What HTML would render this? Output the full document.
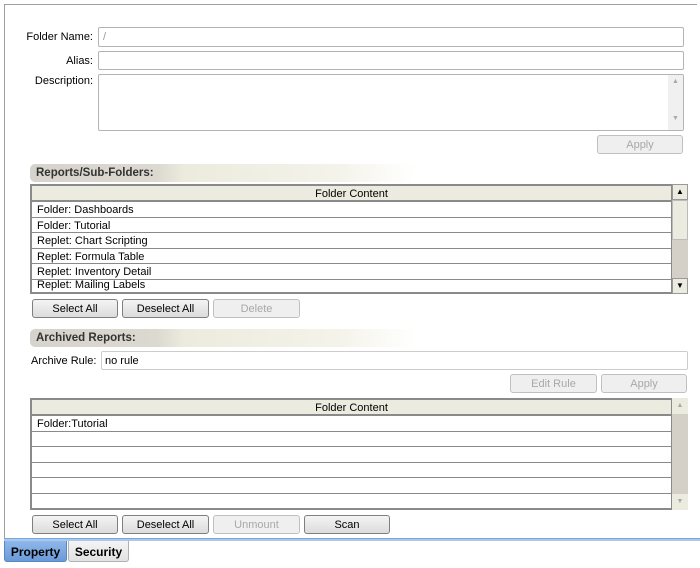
<!DOCTYPE html>
<html><head><style>
*{box-sizing:border-box;margin:0;padding:0}
body{width:700px;height:568px;background:#fff;font-family:"Liberation Sans",Arial,sans-serif;font-size:11px;color:#000;position:relative;overflow:hidden}
.a{position:absolute}
.frame{left:4px;top:4px;width:693px;height:536px;border-top:1px solid #a0a0a0;border-left:1px solid #a0a0a0}
.lbl{text-align:right;width:90px;left:3px}
.inp{border:1px solid #b4b4b4;background:#fff;border-radius:2px}
.btn{height:19px;border:1px solid #7f7f7f;border-radius:3px;background:linear-gradient(#f4f4f4,#dcdcdc);text-align:center;line-height:19px}
.dis{border-color:#c0c0c0;color:#a8a8a8;background:#efefef}
.hdr{height:18px;border-radius:5px 0 0 5px;background:linear-gradient(90deg,#d6d3cc 0%,#dcd9d0 33%,#ecebdd 40%,#f4f3ea 80%,#fff 100%);font-weight:bold;font-size:11.5px;color:#333;padding-left:6px;line-height:19px}
.tbl{border:2px solid #8a8a8a;border-right-width:1px;background:#fff;overflow:hidden}
.th{height:16px;background:#ecebdf;border-bottom:2px solid #8a8a8a;text-align:center;line-height:17px}
.tr{height:15.5px;border-bottom:1px solid #8a8a8a;line-height:17px;padding-left:5px}
.sb{background:#d4d0c8}
</style></head><body>
<div class="a frame"></div>
<div class="a lbl" style="top:31px">Folder Name:</div>
<div class="a inp" style="left:98px;top:27px;width:586px;height:20px;color:#999;padding-left:4px;line-height:18px">/</div>
<div class="a lbl" style="top:55px">Alias:</div>
<div class="a inp" style="left:98px;top:51px;width:586px;height:19px"></div>
<div class="a lbl" style="top:75px">Description:</div>
<div class="a inp" style="left:98px;top:74px;width:586px;height:57px"></div>
<div class="a" style="left:668px;top:75px;width:15px;height:55px;background:#f0f0f0;color:#aaa;font-size:7px;text-align:center;padding-top:3px">▲<div style="margin-top:30px">▼</div></div>
<div class="a btn dis" style="left:597px;top:135px;width:86px">Apply</div>

<div class="a hdr" style="left:30px;top:164px;width:385px">Reports/Sub-Folders:</div>
<div class="a tbl" style="left:30px;top:184px;width:642px;height:110px">
<div class="th">Folder Content</div>
<div class="tr">Folder: Dashboards</div>
<div class="tr">Folder: Tutorial</div>
<div class="tr">Replet: Chart Scripting</div>
<div class="tr">Replet: Formula Table</div>
<div class="tr">Replet: Inventory Detail</div>
<div class="tr" style="line-height:10px">Replet: Mailing Labels</div>
</div>
<div class="a sb" style="left:672px;top:184px;width:16px;height:110px">
<div style="height:16px;background:#ecebdf;border:1px solid #999;font-size:8px;text-align:center;line-height:14px">▲</div>
<div style="height:40px;background:#ecebdf;border:1px solid #bbb"></div>
<div style="position:absolute;bottom:0;width:16px;height:16px;background:#ecebdf;border:1px solid #999;font-size:8px;text-align:center;line-height:14px">▼</div>
</div>
<div class="a btn" style="left:32px;top:299px;width:86px">Select All</div>
<div class="a btn" style="left:122px;top:299px;width:87px">Deselect All</div>
<div class="a btn dis" style="left:213px;top:299px;width:87px">Delete</div>

<div class="a hdr" style="left:30px;top:329px;width:385px">Archived Reports:</div>
<div class="a" style="left:31px;top:355px">Archive Rule:</div>
<div class="a inp" style="left:101px;top:351px;width:587px;height:19px;padding-left:3px;line-height:18px;border-color:#ccc">no rule</div>
<div class="a btn dis" style="left:510px;top:374px;width:87px">Edit Rule</div>
<div class="a btn dis" style="left:601px;top:374px;width:86px">Apply</div>
<div class="a tbl" style="left:30px;top:398px;width:642px;height:112px">
<div class="th">Folder Content</div>
<div class="tr">Folder:Tutorial</div>
<div class="tr"></div><div class="tr"></div><div class="tr"></div><div class="tr"></div><div class="tr" style="border:0"></div>
</div>
<div class="a sb" style="left:672px;top:398px;width:16px;height:112px">
<div style="height:16px;background:#ecebdf;font-size:7px;color:#aaa;text-align:center;line-height:16px">▲</div>
<div style="position:absolute;bottom:0;width:16px;height:16px;background:#ecebdf;font-size:7px;color:#aaa;text-align:center;line-height:16px">▼</div>
</div>
<div class="a btn" style="left:32px;top:515px;width:86px">Select All</div>
<div class="a btn" style="left:122px;top:515px;width:87px">Deselect All</div>
<div class="a btn dis" style="left:213px;top:515px;width:87px">Unmount</div>
<div class="a btn" style="left:304px;top:515px;width:86px">Scan</div>

<div class="a" style="left:4px;top:538px;width:696px;height:3px;background:#a8c8ec;border-top:1px solid #7aa6dc"></div>
<div class="a" style="left:4px;top:541px;width:63px;height:21px;border:1px solid #5a86c6;border-top:0;border-radius:0 0 3px 3px;background:linear-gradient(#8fb8ea,#6a9ad8);font-weight:bold;font-size:12px;text-align:center;line-height:23px">Property</div>
<div class="a" style="left:68px;top:541px;width:61px;height:21px;border:1px solid #b0b0b0;border-top:0;border-radius:0 0 3px 3px;background:linear-gradient(#f4f4f4,#e2e2e2);font-weight:bold;font-size:12px;text-align:center;line-height:23px">Security</div>
</body></html>
